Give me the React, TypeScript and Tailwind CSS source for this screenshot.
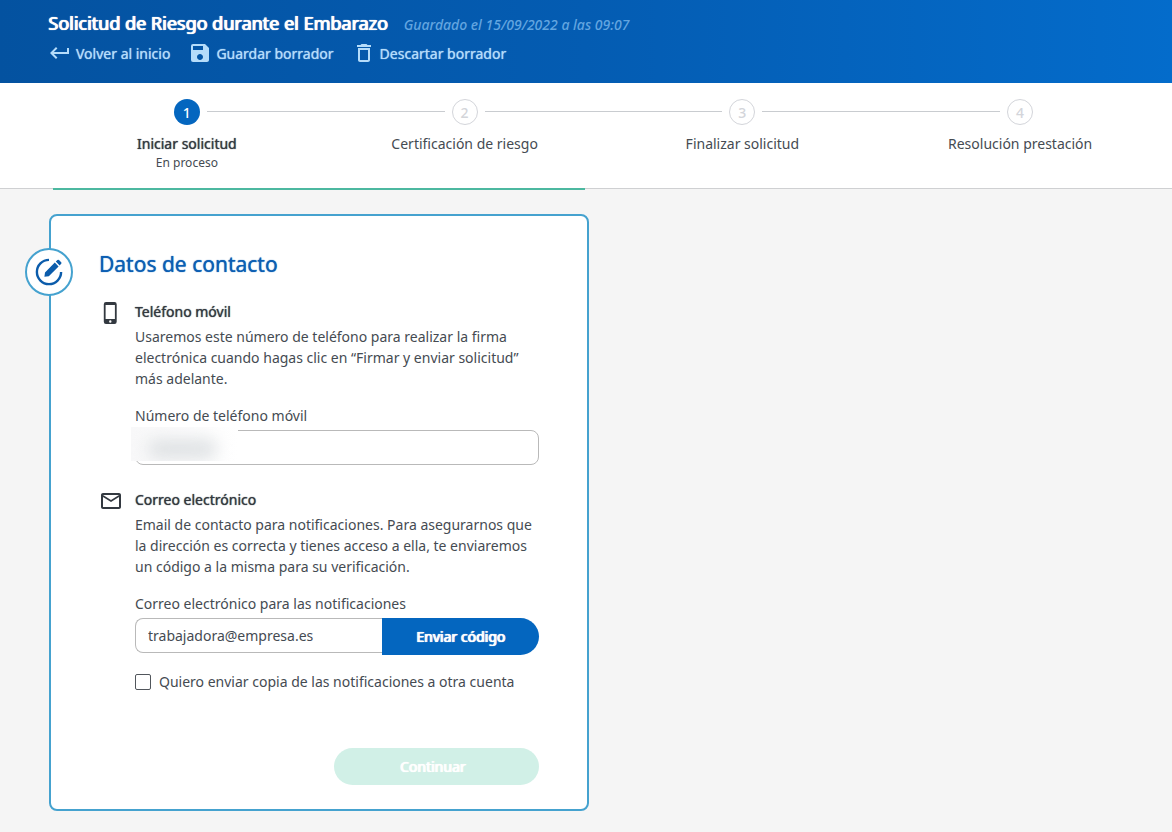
import { useState } from "react";
import type { ReactNode } from "react";
import { MdDeleteOutline, MdKeyboardReturn, MdSave, MdOutlineMail } from "react-icons/md";

const steps = [
  { label: "Iniciar solicitud", status: "En proceso" },
  { label: "Certificación de riesgo" },
  { label: "Finalizar solicitud" },
  { label: "Resolución prestación" },
];

function HeaderAction({ icon, children }: { icon: ReactNode; children: ReactNode }) {
  return (
    <button type="button" className="flex items-center gap-1 text-[#b5dcfa]">
      {icon}
      <span className="[text-shadow:0_0_1px_currentColor]">{children}</span>
    </button>
  );
}

function EditIcon() {
  return (
    <svg viewBox="0 0 28 28" className="size-7" aria-hidden="true">
      <path d="M14 1.900A12.100 12.100 0 1 0 26.100 14" fill="none" stroke="#0b5cab" strokeWidth="2.4" />
      <path d="M9.400 18.800l.6-4.400L19.800 4.600l3.800 3.800-9.800 9.800zM20.800 3.600l1.600-1.600q.8-.7 1.600 0l2.200 2.200q.7.8 0 1.600L24.600 7.400z" fill="#0b5cab" />
    </svg>
  );
}

function PhoneIcon() {
  return (
    <svg viewBox="0 0 24 24" className="size-6" aria-hidden="true">
      <path
        fillRule="evenodd"
        d="M7 1h8.500a2.200 2.200 0 0 1 2.200 2.200v17.600a2.200 2.200 0 0 1-2.200 2.200h-8.500a2.200 2.200 0 0 1-2.200-2.200V3.200A2.200 2.200 0 0 1 7 1zM6.600 4v14h9.300V4zM11.300 19.300a1.200 1.200 0 1 0 0 2.400 1.200 1.200 0 0 0 0-2.400z"
        fill="#333940"
      />
    </svg>
  );
}

export default function App() {
  const [email, setEmail] = useState("trabajadora@empresa.es");
  const [phone, setPhone] = useState("");
  const [copy, setCopy] = useState(false);

  return (
    <div className="min-h-screen bg-[#f5f5f5] font-['Noto_Sans','Open_Sans',sans-serif] text-sm leading-[21px] text-[#454b52]">
      <header className="h-[83px] bg-linear-to-r from-[#0452a0] via-[#045cb2] to-[#046ccb] px-12 pt-[9px]">
        <div className="flex items-baseline gap-4">
          <h1 className="text-lg leading-7 text-white [text-shadow:0_0_1px_currentColor,1px_0_currentColor]">
            Solicitud de Riesgo durante el Embarazo
          </h1>
          <p className="font-medium text-[#62a5e0] italic">Guardado el 15/09/2022 a las 09:07</p>
        </div>
        <nav className="mt-1 flex gap-[18px]" aria-label="Acciones del borrador">
          <HeaderAction icon={<MdKeyboardReturn className="size-6" />}>Volver al inicio</HeaderAction>
          <HeaderAction icon={<MdSave className="size-6" />}>Guardar borrador</HeaderAction>
          <HeaderAction icon={<MdDeleteOutline className="size-6" />}>Descartar borrador</HeaderAction>
        </nav>
      </header>

      <ol className="grid h-[106px] grid-cols-4 border-b border-[#cfd0d2] bg-white pt-4 pr-[13px] pl-12">
        {steps.map((step, index) => (
          <li key={step.label} className="relative flex flex-col items-center">
            {index > 0 && <span className="absolute top-3 right-1/2 mr-5 h-px w-[calc(100%-40px)] bg-[#c9ccd0]" />}
            <span
              className={
                index === 0
                  ? "flex size-[26px] items-center justify-center rounded-full bg-[#0466bf] font-medium text-white"
                  : "flex size-[26px] items-center justify-center rounded-full border border-[#d3d5da] font-medium text-[#d3d5da]"
              }
            >
              {index + 1}
            </span>
            <span className={index === 0 ? "mt-2 text-[#333940] [text-shadow:0_0_1px_currentColor]" : "mt-2"}>
              {step.label}
            </span>
            {step.status && <span className="text-xs leading-[18px]">{step.status}</span>}
          </li>
        ))}
      </ol>

      <main className="pb-5 pl-[49px]">
        <div className="-mt-px ml-1 h-0.5 w-[532px] max-w-full bg-[#4cb8a0]" />
        <section className="relative mt-6 w-full max-w-[540px] rounded-lg border-2 border-[#45a2cf] bg-white px-12 pt-8 pb-6">
          <div className="absolute top-8 -left-[26px] flex size-12 items-center justify-center rounded-full border-2 border-[#45a2cf] bg-white">
            <EditIcon />
          </div>
          <h2 className="text-[21px] leading-8 text-[#0c5fb3] [text-shadow:0_0_1px_currentColor]">Datos de contacto</h2>

          <div className="mt-[21px] flex gap-3">
            <div className="shrink-0">
              <PhoneIcon />
            </div>
            <div className="grow">
              <h3 className="pb-1 text-[#333940] [text-shadow:0_0_1px_currentColor]">Teléfono móvil</h3>
              <p>
                Usaremos este número de teléfono para realizar la firma electrónica cuando hagas clic en “Firmar y enviar
                solicitud” más adelante.
              </p>
              <label htmlFor="phone" className="mt-4 block">
                Número de teléfono móvil
              </label>
              <div className="relative mt-1">
                <input
                  id="phone"
                  type="tel"
                  value={phone}
                  onChange={(e) => setPhone(e.target.value)}
                  className="block h-[35px] w-full rounded-lg border border-[#b9b9b9] bg-white px-3"
                />
                <div className="absolute -top-[3px] -left-1 h-[34px] w-[107px] overflow-hidden bg-linear-to-r from-[#f8f8f9] to-white">
                  <div className="mt-3 ml-4 h-5 w-[70px] rounded-full bg-[#dfe2e4] blur-[8px]" />
                </div>
              </div>
            </div>
          </div>

          <div className="mt-6 flex gap-3">
            <div className="shrink-0">
              <MdOutlineMail className="size-6 text-[#333940]" />
            </div>
            <div className="grow">
              <h3 className="pb-1 text-[#333940] [text-shadow:0_0_1px_currentColor]">Correo electrónico</h3>
              <p>
                Email de contacto para notificaciones. Para asegurarnos que la dirección es correcta y tienes acceso a
                ella, te enviaremos un código a la misma para su verificación.
              </p>
              <label htmlFor="email" className="mt-4 block">
                Correo electrónico para las notificaciones
              </label>
              <div className="mt-1 flex items-start">
                <input
                  id="email"
                  type="email"
                  value={email}
                  onChange={(e) => setEmail(e.target.value)}
                  className="h-[35px] min-w-0 grow rounded-l-lg border border-r-0 border-[#b9b9b9] bg-white px-3"
                />
                <button
                  type="button"
                  className="h-[37px] w-[157px] rounded-r-full bg-[#0466bf] text-white [text-shadow:0_0_1px_currentColor,1px_0_currentColor]"
                >
                  Enviar código
                </button>
              </div>
              <label className="mt-4 flex items-center gap-2">
                <input
                  type="checkbox"
                  checked={copy}
                  onChange={(e) => setCopy(e.target.checked)}
                  className="size-4 appearance-none rounded-xs border border-[#51565c] bg-white checked:bg-[#0466bf]"
                />
                Quiero enviar copia de las notificaciones a otra cuenta
              </label>
            </div>
          </div>

          <div className="mt-14 flex justify-end">
            <button
              type="button"
              disabled
              className="h-[37px] w-[205px] rounded-full bg-[#d1f0e7] pr-2 text-white [text-shadow:0_0_1px_currentColor,1px_0_currentColor]"
            >
              Continuar
            </button>
          </div>
        </section>
      </main>
    </div>
  );
}
